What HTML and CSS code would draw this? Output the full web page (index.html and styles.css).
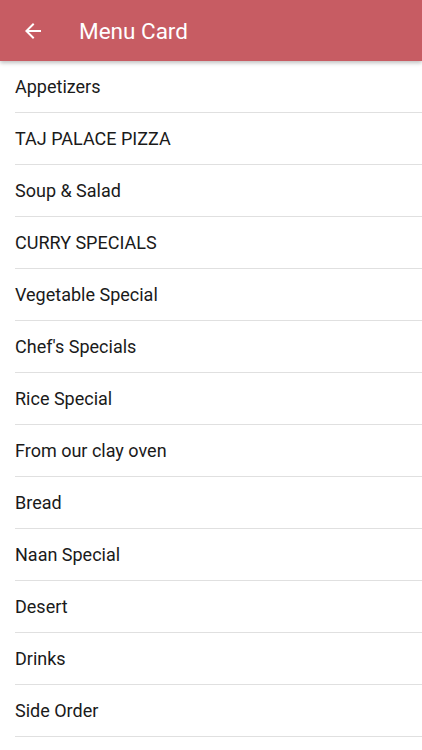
FILE: index.html
```html
<!DOCTYPE html>
<html lang="en">
    <head>
        <meta charset="utf-8">
        <title>Menu Card</title>
        <link rel="stylesheet" href="styles.css">
    </head>
    <body>
        <header class="toolbar">
            <button type="button" class="back" aria-label="Back">
                <svg width="24" height="24" viewBox="0 0 24 24">
                    <path d="M20 11H7.83l5.59-5.59L12 4l-8 8 8 8 1.41-1.41L7.83 13H20v-2z" fill="#fff"/>
                </svg>
            </button>
            <h1>Menu Card</h1>
        </header>

        <ul class="menu">
            <li>Appetizers</li>
            <li>TAJ PALACE PIZZA</li>
            <li>Soup &amp; Salad</li>
            <li>CURRY SPECIALS</li>
            <li>Vegetable Special</li>
            <li>Chef's Specials</li>
            <li>Rice Special</li>
            <li>From our clay oven</li>
            <li>Bread</li>
            <li>Naan Special</li>
            <li>Desert</li>
            <li>Drinks</li>
            <li>Side Order</li>
        </ul>
    </body>
</html>
```

FILE: styles.css
```css
body {
    margin: 0;
    padding: 0;
    background: white;
    font-family: Roboto, "Liberation Sans", sans-serif;
    overflow: hidden;
}

.toolbar {
    position: relative;
    z-index: 1;
    display: flex;
    align-items: center;
    height: 61px;
    padding-left: 21px;
    background-color: #c75c63;
    box-shadow: 0 2px 4px rgba(0, 0, 0, 0.25);
}

.back {
    display: flex;
    margin: 0;
    padding: 0;
    border: none;
    background: none;
}

.toolbar h1 {
    margin: 0 0 0 34px;
    padding: 0;
    font-size: 22.5px;
    font-weight: 400;
    color: white;
}

.menu {
    margin: 0;
    padding: 0;
    list-style: none;
}

.menu li {
    display: flex;
    align-items: center;
    height: 51px;
    margin-left: 15px;
    border-bottom: 1px solid #e0e0e0;
    font-size: 18px;
    color: #1a1a1a;
}
```
